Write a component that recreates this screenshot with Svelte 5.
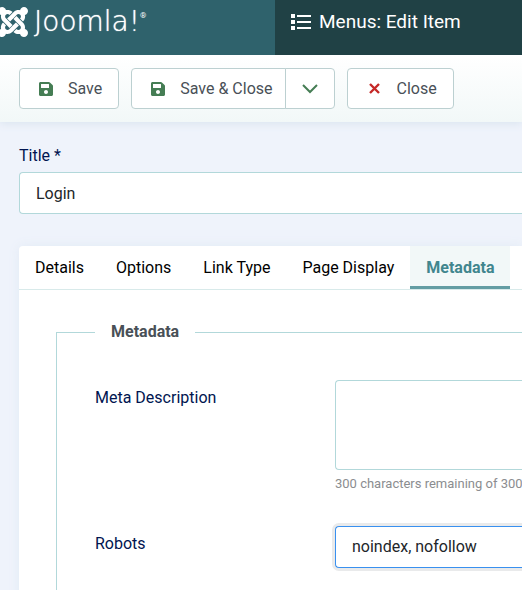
<script>
  let tabs = ["Details", "Options", "Link Type", "Page Display", "Metadata"];
  let activeTab = $state("Metadata");
  let title = $state("Login");
  let description = $state("");
  let robots = $state("noindex, nofollow");

  const maxChars = 300;
  const robotsOptions = [
    "index, follow",
    "noindex, follow",
    "index, nofollow",
    "noindex, nofollow"
  ];
  // one arm of the logo, repeated at each quarter turn
  const logoTurns = [0, 90, 180, 270];

  let remaining = $derived(maxChars - description.length);
</script>

{#snippet saveIcon()}
  <svg class="icon save" viewBox="0 32 448 448" aria-hidden="true">
    <path d="M433.941 129.941l-83.882-83.882A48 48 0 0 0 316.118 32H48C21.49 32 0 53.49 0 80v352c0 26.51 21.49 48 48 48h352c26.51 0 48-21.49 48-48V163.882a48 48 0 0 0-14.059-33.941zM224 416c-35.346 0-64-28.654-64-64s28.654-64 64-64 64 28.654 64 64-28.654 64-64 64zm96-304.52V212c0 6.627-5.373 12-12 12H76c-6.627 0-12-5.373-12-12V108c0-6.627 5.373-12 12-12h228.52c3.183 0 6.235 1.264 8.485 3.515l3.48 3.48A11.996 11.996 0 0 1 320 111.48z" />
  </svg>
{/snippet}

<header>
  <a class="logo" href="#home">
    <svg viewBox="0 0 24 24" aria-hidden="true">
      {#each logoTurns as turn}
        <path
          transform="rotate({turn} 12 12)"
          d="M16.719 14.759L14.22 17.26l-2.37 2.37-.462.466c-1.368 1.365-3.297 1.83-5.047 1.397-.327 1.424-1.604 2.49-3.13 2.49C1.438 23.983 0 22.547 0 20.772c0-1.518 1.055-2.789 2.469-3.123-.446-1.76.016-3.705 1.396-5.08l.179-.18 2.37 2.37-.184.181c-.769.779-.769 2.024 0 2.789.771.78 2.022.78 2.787 0l.465-.465 2.367-2.371 2.502-2.506 2.368 2.372z" />
      {/each}
    </svg>
    <span class="brand">Joomla!</span>
    <sup>®</sup>
  </a>
  <h1>
    <svg viewBox="0 0 20 16" aria-hidden="true">
      <path d="M0 0h4v4H0zM0 6h4v4H0zM0 12h4v4H0zM6 1h14v2H6zM6 7h14v2H6zM6 13h14v2H6z" />
    </svg>
    Menus: Edit Item
  </h1>
</header>

<div class="toolbar">
  <button class="btn">{@render saveIcon()}Save</button>
  <div class="group">
    <button class="btn">{@render saveIcon()}Save &amp; Close</button>
    <button class="btn toggle" aria-label="More save options">
      <svg viewBox="0 0 16 10" aria-hidden="true">
        <path d="M1 1l7 7 7-7" />
      </svg>
    </button>
  </div>
  <button class="btn">
    <svg class="icon close" viewBox="0 0 15 14" aria-hidden="true">
      <path d="M3 2l9 9M12 2l-9 9" />
    </svg>Close
  </button>
</div>

<main>
  <label for="title">Title *</label>
  <input id="title" class="field" type="text" bind:value={title} />

  <section class="card">
    <div class="tabs" role="tablist">
      {#each tabs as tab}
        <button
          role="tab"
          aria-selected={activeTab === tab}
          class:active={activeTab === tab}
          onclick={() => (activeTab = tab)}>{tab}</button>
      {/each}
    </div>

    <fieldset>
      <legend>Metadata</legend>
      <div class="row">
        <label for="description">Meta Description</label>
        <div>
          <textarea
            id="description"
            class="field"
            maxlength={maxChars}
            bind:value={description}></textarea>
          <small>{remaining} characters remaining of {maxChars}</small>
        </div>
      </div>
      <div class="row">
        <label for="robots">Robots</label>
        <select id="robots" class="field focused" bind:value={robots}>
          {#each robotsOptions as option}
            <option>{option}</option>
          {/each}
        </select>
      </div>
    </fieldset>
  </section>
</main>

<style>
  :global(body) {
    margin: 0;
    background: #eff3fb;
    font-family: Roboto, sans-serif;
    font-size: 16px;
    line-height: 24px;
    color: #22262a;
    overflow-x: hidden;
  }

  /* keeps the toolbar shadow below the header */
  header {
    position: relative;
    display: flex;
    height: 55px;
    background: #204145;
    color: #fff;
  }

  .logo {
    display: flex;
    flex: 0 0 275px;
    box-sizing: border-box;
    padding-top: 7px;
    background: #2f626c;
    color: #fff;
    text-decoration: none;
    overflow: hidden;
  }

  .logo svg {
    flex: none;
    width: 30px;
    height: 30px;
    margin-left: -2px;
    fill: #fff;
  }

  .brand {
    margin-left: 6px;
    font-family: "DejaVu Sans", sans-serif;
    font-weight: 200;
    font-size: 28px;
    line-height: 30px;
    text-shadow: 0 0 1px #fff;
  }

  sup {
    font-size: 8px;
    line-height: 18px;
  }

  h1 {
    display: flex;
    align-items: center;
    gap: 8px;
    height: 44px;
    margin: 0;
    padding-left: 16px;
    font-size: 19px;
    font-weight: 400;
    white-space: nowrap;
  }

  h1 svg {
    width: 20px;
    height: 16px;
    fill: #fff;
  }

  .toolbar {
    display: flex;
    gap: 12px;
    padding: 13px 19px;
    background: linear-gradient(#fff, #f2f8f8);
    box-shadow: 0 2px 8px #dbe5ef;
  }

  .btn {
    display: flex;
    align-items: center;
    height: 41px;
    padding: 0 16px 0 19px;
    border: 1px solid #bcd0d1;
    border-radius: 4px;
    background: #fff;
    color: #495057;
    font: inherit;
    white-space: nowrap;
  }

  .icon {
    width: 14px;
    height: 14px;
    margin-right: 15px;
  }

  .save {
    fill: #457d54;
  }

  .close {
    width: 15px;
    fill: none;
    stroke: #c52827;
    stroke-width: 2.4;
  }

  .group {
    display: flex;
  }

  .group .btn:first-child {
    padding-right: 12px;
    border-radius: 4px 0 0 4px;
  }

  .group .toggle {
    margin-left: -1px;
    padding: 0 16px;
    border-radius: 0 4px 4px 0;
  }

  .toggle svg {
    width: 16px;
    height: 10px;
    fill: none;
    stroke: #457d54;
    stroke-width: 2;
  }

  main {
    padding: 22px 0 0 19px;
  }

  label {
    display: block;
    color: #001550;
  }

  .field {
    display: block;
    box-sizing: border-box;
    width: 100%;
    height: 42px;
    padding: 0 16px;
    border: 1px solid #b2d8da;
    border-right: 0;
    border-radius: 4px 0 0 4px;
    outline: 0;
    background: #fff;
    color: #22262a;
    font: inherit;
  }

  #title {
    margin-top: 4px;
  }

  .card {
    margin-top: 32px;
    padding-bottom: 32px;
    border-radius: 4px 0 0;
    background: #fff;
    box-shadow: 0 0 12px #e2eaf5;
  }

  .tabs {
    display: flex;
    border-bottom: 1px solid #d8eaea;
  }

  .tabs button {
    height: 43px;
    padding: 0 16px;
    border: 0;
    background: none;
    color: #000;
    font: inherit;
    white-space: nowrap;
  }

  .tabs .active {
    background: #f2f8f8;
    box-shadow: inset 0 -3px #639da3;
    color: #41868e;
    font-weight: 700;
  }

  fieldset {
    min-width: 0;
    margin: 30px 0 0 37px;
    padding: 36px 0 32px 38px;
    border: 1px solid #b2d8da;
    border-right: 0;
  }

  legend {
    padding: 0 16px;
    color: #495057;
    font-weight: 700;
  }

  .row {
    display: grid;
    grid-template-columns: 240px minmax(0, 1fr);
    margin-bottom: 32px;
  }

  .row label {
    padding-top: 6px;
  }

  textarea.field {
    height: 90px;
    padding: 8px 16px;
    resize: none;
  }

  small {
    display: block;
    margin-top: 4px;
    color: #8b8d90;
    font-size: 13px;
    line-height: 20px;
    white-space: nowrap;
  }

  select.field {
    appearance: none;
  }

  .focused {
    border-color: #3990ef;
    box-shadow: 0 0 0 3px #e9eaeb;
  }
</style>
